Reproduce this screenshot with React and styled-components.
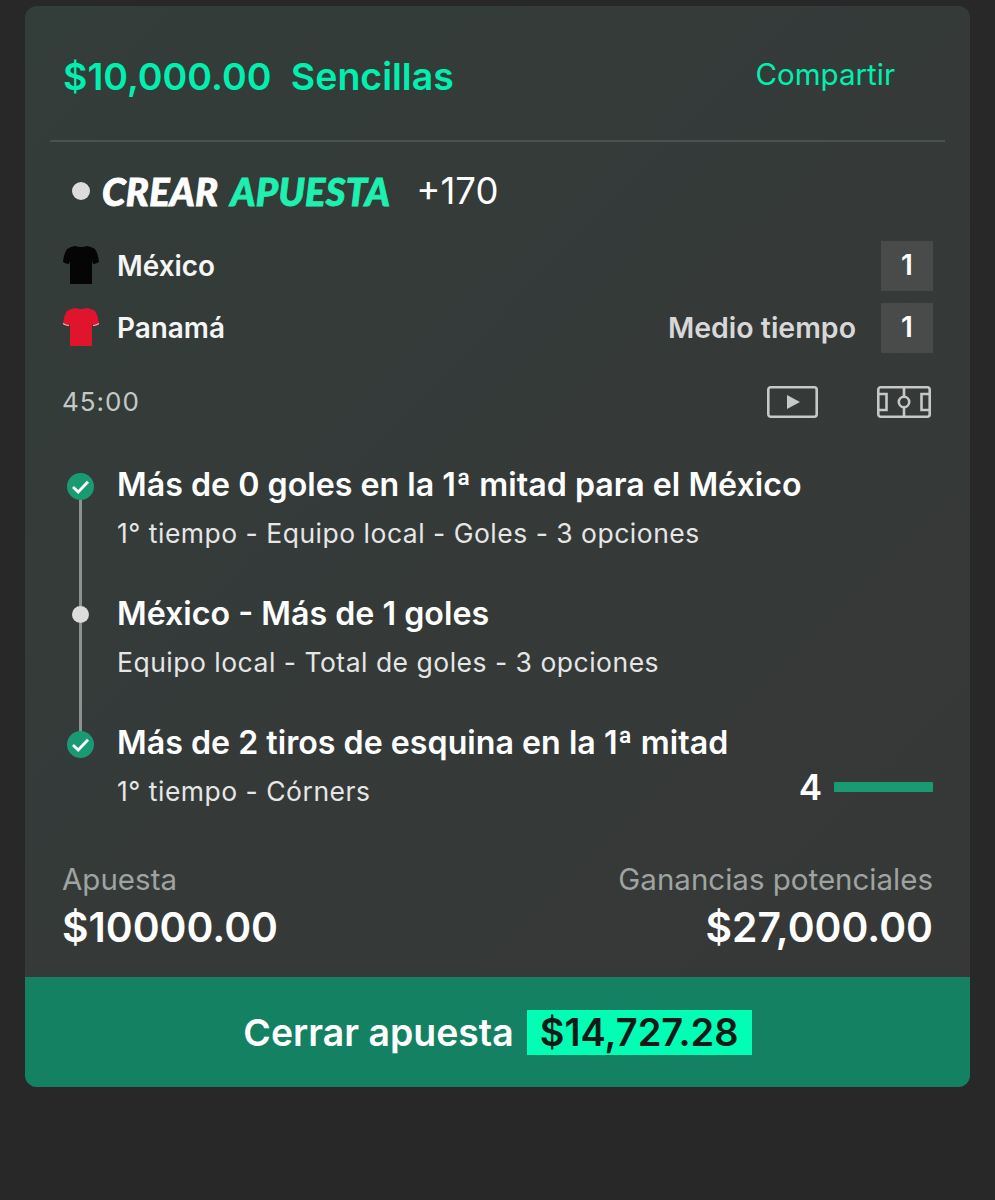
import React from 'react'
import styled, { createGlobalStyle } from 'styled-components'

const GlobalStyle = createGlobalStyle`
  html, body {
    margin: 0;
    background: #282828;
  }
  body {
    font-family: Inter, "Noto Sans", "Liberation Sans", sans-serif;
    -webkit-font-smoothing: antialiased;
  }
`

function Shirt({ color, trim }) {
  return (
    <svg width="38" height="40" viewBox="0 0 38 40">
      <path
        d="M13 1 Q19 3 25 1 Q30 2 33 4 Q36 8 37 17 Q34 19 31 19 L30 16 L30 39 L8 39 L8 16 L7 19 Q4 19 1 17 Q2 8 5 4 Q8 2 13 1 Z"
        fill={color}
      />
      {trim && <path d="M1 16.5 Q4 18.5 7 18.5 M37 16.5 Q34 18.5 31 18.5" fill="none" stroke={trim} strokeWidth="1.2" />}
    </svg>
  )
}

function Check() {
  return (
    <svg width="27" height="27" viewBox="0 0 27 27">
      <circle cx="13.5" cy="13.5" r="13.5" fill="#1a9a72" />
      <path d="M6 14 L11.2 19 L21 8.8" fill="none" stroke="#fff" strokeWidth="2.8" />
    </svg>
  )
}

function PlayIcon() {
  return (
    <svg width="51" height="32" viewBox="0 0 51 32">
      <rect x="1.3" y="1.3" width="48.4" height="29.4" rx="2.5" fill="none" stroke="#c8c8c8" strokeWidth="2.6" />
      <path d="M20 9 L33 16 L20 23 Z" fill="#c8c8c8" />
    </svg>
  )
}

function PitchIcon() {
  return (
    <svg width="54" height="32" viewBox="0 0 54 32" fill="none" stroke="#c8c8c8" strokeWidth="2.6">
      <rect x="1.3" y="1.3" width="51.4" height="29.4" rx="2.5" />
      <path d="M27 1.3 V10.5 M27 21.5 V30.7" />
      <circle cx="27" cy="16" r="5.2" />
      <path d="M1.3 8 H9.5 V24 H1.3 M52.7 8 H44.5 V24 H52.7" />
    </svg>
  )
}

const Page = styled.div`
  width: 995px;
  height: 1200px;
  padding: 6px 25px 0;
  box-sizing: border-box;
  background: #282828;
`

const Card = styled.div`
  height: 1081px;
  display: flex;
  flex-direction: column;
  border-radius: 12px;
  overflow: hidden;
  background: linear-gradient(135deg, #333d3a 0%, #353a39 50%, #373837 100%);
`

const Header = styled.div`
  height: 136px;
  margin: 0 25px;
  padding: 0 50px 0 13px;
  box-sizing: border-box;
  display: flex;
  justify-content: space-between;
  border-bottom: 2px solid #4a5250;
`

const Title = styled.div`
  margin-top: 49px;
  font-size: 37.5px;
  line-height: 44px;
  font-weight: 600;
  color: #00f0b0;
  word-spacing: 10px;
  white-space: nowrap;
`

const Share = styled.div`
  margin-top: 49px;
  font-size: 29.5px;
  line-height: 38px;
  color: #00f0b0;
`

const Body = styled.div`
  flex: 1;
  padding: 0 37px;
  display: flex;
  flex-direction: column;
`

const Brand = styled.div`
  height: 54px;
  margin-top: 22px;
  display: flex;
  align-items: center;
`

const BrandDot = styled.span`
  width: 18px;
  height: 18px;
  margin: 0 12px 0 10px;
  border-radius: 50%;
  background: #dcdcdc;
`

const BrandName = styled.span`
  font-family: Lato, sans-serif;
  font-size: 38px;
  font-style: italic;
  font-weight: 900;
  letter-spacing: 0.3px;
  -webkit-text-stroke: 0.9px ${p => (p.$accent ? '#1df0b0' : '#fff')};
  color: ${p => (p.$accent ? '#1df0b0' : '#fff')};
  margin-right: ${p => (p.$accent ? '26px' : '12px')};
`

const Odds = styled.span`
  font-size: 36.5px;
  color: #fff;
`

const Teams = styled.div`
  margin-top: 23px;
  display: flex;
  flex-direction: column;
  gap: 12px;
`

const TeamRow = styled.div`
  height: 50px;
  display: flex;
  align-items: center;
`

const ShirtSlot = styled.span`
  display: flex;
  margin-top: -2px;
`

const TeamName = styled.span`
  margin-left: 17px;
  padding-bottom: 1px;
  font-size: 27.9px;
  font-weight: 600;
  color: #f5f5f5;
`

const Period = styled.span`
  margin-left: auto;
  margin-right: 25px;
  padding-bottom: 2px;
  font-size: 28.5px;
  font-weight: 600;
  color: #d8d8d8;
`

const Score = styled.span`
  width: 52px;
  height: 50px;
  margin-left: ${p => (p.$push ? 'auto' : '0')};
  padding-bottom: 2px;
  box-sizing: border-box;
  display: flex;
  align-items: center;
  justify-content: center;
  background: #484b4a;
  font-size: 28px;
  font-weight: 600;
  color: #fff;
`

const Clock = styled.div`
  margin-top: 28px;
  height: 40px;
  display: flex;
  align-items: center;
  font-size: 26px;
  letter-spacing: 1px;
  color: #c4c8c7;
`

const MediaIcons = styled.div`
  margin-left: auto;
  margin-right: 2px;
  padding-top: 1px;
  display: flex;
  gap: 59px;
`

const Legs = styled.div`
  margin-top: 52px;
`

const Leg = styled.div`
  height: 129px;
  display: flex;
`

const Rail = styled.div`
  width: 36px;
  flex: none;
  display: flex;
  flex-direction: column;
  align-items: center;
`

const Line = styled.div`
  flex: 1;
  width: 3px;
  background: #8f9190;
`

const Dot = styled.div`
  width: 17px;
  height: 17px;
  border-radius: 50%;
  background: #dcdcdc;
`

const DotSlot = styled.div`
  height: 4px;
  width: 3px;
  background: #8f9190;
`

const LegBody = styled.div`
  flex: 1;
  margin-left: 19px;
`

const LegTitle = styled.div`
  margin-top: -8px;
  font-size: 32.2px;
  line-height: 40px;
  font-weight: 600;
  color: #fff;
  white-space: nowrap;
`

const LegSub = styled.div`
  margin-top: 8px;
  display: flex;
  justify-content: space-between;
  font-size: 26.5px;
  line-height: 40px;
  letter-spacing: 0.5px;
  color: #e6e6e6;
`

const Progress = styled.div`
  display: flex;
  align-items: center;
  gap: 12px;
  margin-top: -9px;
  font-size: 35px;
  font-weight: 600;
  letter-spacing: 0;
  color: #fff;
`

const ProgressBar = styled.span`
  width: 99px;
  height: 10px;
  border-radius: 1px;
  background: #1a9a72;
`

const Stake = styled.div`
  display: flex;
  justify-content: space-between;
`

const StakeCol = styled.div`
  display: flex;
  flex-direction: column;
  align-items: ${p => (p.$right ? 'flex-end' : 'flex-start')};
`

const StakeLabel = styled.div`
  font-size: 29.5px;
  line-height: 38px;
  color: #9fa3a2;
`

const StakeValue = styled.div`
  margin-top: 4px;
  font-size: 40.8px;
  line-height: 50px;
  font-weight: 600;
  color: #fff;
`

const CashOut = styled.div`
  height: 110px;
  display: flex;
  align-items: center;
  justify-content: center;
  gap: 13px;
  background: #148162;
  font-size: 37.4px;
  font-weight: 600;
  color: #fff;
`

const CashAmount = styled.span`
  height: 45px;
  padding: 0 13px;
  display: flex;
  align-items: center;
  background: #00ffb4;
  font-size: 38px;
  color: #111a17;
`

export default function App() {
  return (
    <>
      <GlobalStyle />
      <Page>
        <Card>
          <Header>
            <Title>$10,000.00 Sencillas</Title>
            <Share>Compartir</Share>
          </Header>
          <Body>
            <Brand>
              <BrandDot />
              <BrandName>CREAR</BrandName>
              <BrandName $accent>APUESTA</BrandName>
              <Odds>+170</Odds>
            </Brand>
            <Teams>
              <TeamRow>
                <ShirtSlot><Shirt color="#050505" /></ShirtSlot>
                <TeamName>México</TeamName>
                <Score $push>1</Score>
              </TeamRow>
              <TeamRow>
                <ShirtSlot><Shirt color="#e0142c" trim="#f2b8b8" /></ShirtSlot>
                <TeamName>Panamá</TeamName>
                <Period>Medio tiempo</Period>
                <Score>1</Score>
              </TeamRow>
            </Teams>
            <Clock>
              45:00
              <MediaIcons>
                <PlayIcon />
                <PitchIcon />
              </MediaIcons>
            </Clock>
            <Legs>
              <Leg>
                <Rail>
                  <Check />
                  <Line />
                </Rail>
                <LegBody>
                  <LegTitle>Más de 0 goles en la 1ª mitad para el México</LegTitle>
                  <LegSub>1° tiempo - Equipo local - Goles - 3 opciones</LegSub>
                </LegBody>
              </Leg>
              <Leg>
                <Rail>
                  <DotSlot />
                  <Dot />
                  <Line />
                </Rail>
                <LegBody>
                  <LegTitle>México - Más de 1 goles</LegTitle>
                  <LegSub>Equipo local - Total de goles - 3 opciones</LegSub>
                </LegBody>
              </Leg>
              <Leg>
                <Rail>
                  <Check />
                </Rail>
                <LegBody>
                  <LegTitle>Más de 2 tiros de esquina en la 1ª mitad</LegTitle>
                  <LegSub>
                    1° tiempo - Córners
                    <Progress>
                      4
                      <ProgressBar />
                    </Progress>
                  </LegSub>
                </LegBody>
              </Leg>
            </Legs>
            <Stake>
              <StakeCol>
                <StakeLabel>Apuesta</StakeLabel>
                <StakeValue>$10000.00</StakeValue>
              </StakeCol>
              <StakeCol $right>
                <StakeLabel>Ganancias potenciales</StakeLabel>
                <StakeValue>$27,000.00</StakeValue>
              </StakeCol>
            </Stake>
          </Body>
          <CashOut>
            Cerrar apuesta
            <CashAmount>$14,727.28</CashAmount>
          </CashOut>
        </Card>
      </Page>
    </>
  )
}
